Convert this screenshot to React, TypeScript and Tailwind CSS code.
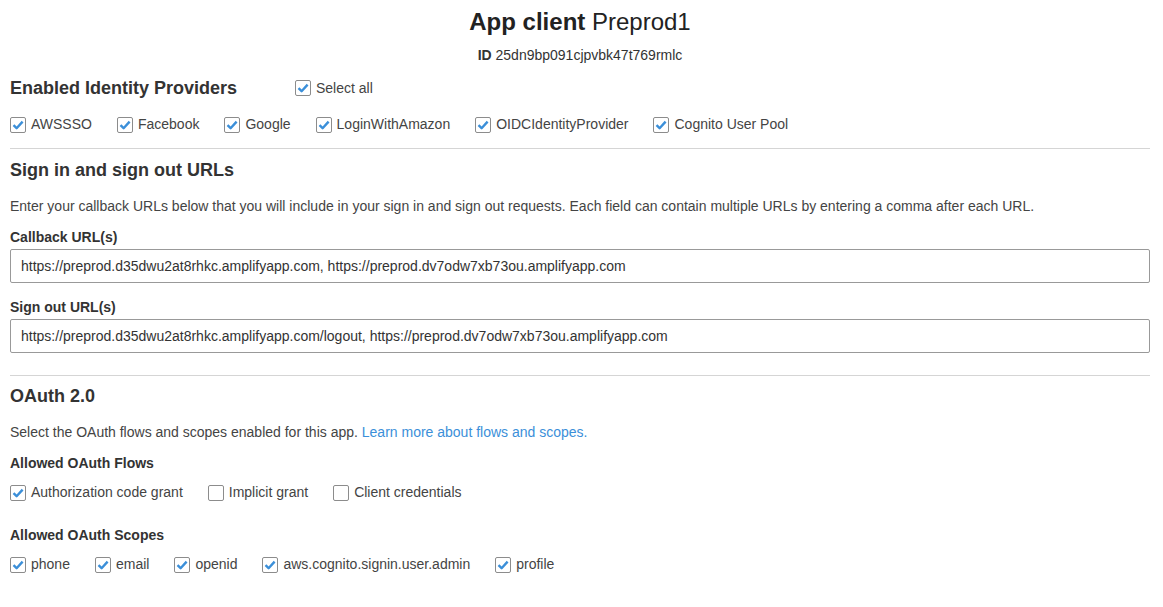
import React from 'react'

function Check({ checked = true }: { checked?: boolean }) {
  return (
    <span className="flex h-[16px] w-[16px] shrink-0 items-center justify-center rounded-[2px] border border-[#8c8c8c] bg-white">
      {checked && (
        <svg width="12" height="10" viewBox="0 0 12 10">
          <path d="M1.5 5.2 L4.6 8.2 L10.6 1.6" fill="none" stroke="#3b8fd9" strokeWidth="2.4" strokeLinejoin="round" />
        </svg>
      )}
    </span>
  )
}

function Option({ label, checked = true }: { label: string; checked?: boolean }) {
  return (
    <label className="mr-[25px] flex items-center gap-[5px] text-[14px] text-[#444]">
      <Check checked={checked} />
      <span>{label}</span>
    </label>
  )
}

function Divider() {
  return <div className="h-px bg-[#d5d5d5]" />
}

export default function App() {
  const providers = ['AWSSSO', 'Facebook', 'Google', 'LoginWithAmazon', 'OIDCIdentityProvider', 'Cognito User Pool']
  const scopes = ['phone', 'email', 'openid', 'aws.cognito.signin.user.admin', 'profile']

  return (
    <div className="min-h-[607px] bg-white pl-[10px] pr-[13px] pt-[7px] font-['Liberation_Sans',Arial,sans-serif] text-[#333]">
      <div className="text-center">
        <h1 className="text-[24px] leading-[30px] text-[#222]">
          <span className="font-bold">App client</span> Preprod1
        </h1>
        <p className="mt-[8px] text-[14px] leading-[20px] text-[#333]">
          <span className="font-bold">ID</span> 25dn9bp091cjpvbk47t769rmlc
        </p>
      </div>

      <div className="mt-[11px] flex items-center">
        <h2 className="w-[285px] text-[18px] font-bold leading-[24px] text-[#333]">Enabled Identity Providers</h2>
        <Option label="Select all" />
      </div>
      <div className="mt-[14px] flex items-center">
        {providers.map((p) => (
          <Option key={p} label={p} />
        ))}
      </div>

      <div className="mt-[13px]">
        <Divider />
      </div>

      <h2 className="mt-[9px] text-[18px] font-bold leading-[24px] text-[#333]">Sign in and sign out URLs</h2>
      <p className="mt-[14px] text-[14px] leading-[20px] text-[#444]">
        Enter your callback URLs below that you will include in your sign in and sign out requests. Each field can contain multiple URLs by entering a comma after each URL.
      </p>

      <div className="mt-[11px] text-[14px] font-bold leading-[20px] text-[#333]">Callback URL(s)</div>
      <div className="mt-[2px] flex h-[34px] items-center rounded-[2px] border border-[#999] px-[10px] text-[14px] text-[#333]">
        https://preprod.d35dwu2at8rhkc.amplifyapp.com, https://preprod.dv7odw7xb73ou.amplifyapp.com
      </div>

      <div className="mt-[14px] text-[14px] font-bold leading-[20px] text-[#333]">Sign out URL(s)</div>
      <div className="mt-[2px] flex h-[34px] items-center rounded-[2px] border border-[#999] px-[10px] text-[14px] text-[#333]">
        https://preprod.d35dwu2at8rhkc.amplifyapp.com/logout, https://preprod.dv7odw7xb73ou.amplifyapp.com
      </div>

      <div className="mt-[22px]">
        <Divider />
      </div>

      <h2 className="mt-[8px] text-[18px] font-bold leading-[24px] text-[#333]">OAuth 2.0</h2>
      <p className="mt-[14px] text-[14px] leading-[20px] text-[#444]">
        Select the OAuth flows and scopes enabled for this app.{' '}
        <a className="text-[#3b8fd9]">Learn more about flows and scopes.</a>
      </p>

      <div className="mt-[11px] text-[14px] font-bold leading-[20px] text-[#333]">Allowed OAuth Flows</div>
      <div className="mt-[9px] flex items-center">
        <Option label="Authorization code grant" />
        <Option label="Implicit grant" checked={false} />
        <Option label="Client credentials" checked={false} />
      </div>

      <div className="mt-[22px] text-[14px] font-bold leading-[20px] text-[#333]">Allowed OAuth Scopes</div>
      <div className="mt-[9px] flex items-center">
        {scopes.map((s) => (
          <Option key={s} label={s} />
        ))}
      </div>
    </div>
  )
}
